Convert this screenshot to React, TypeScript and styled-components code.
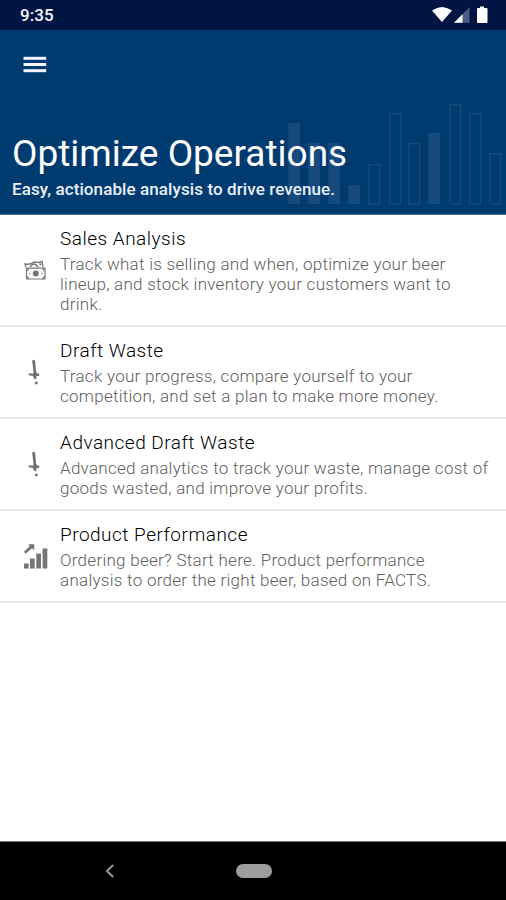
import React from 'react';
import styled, { createGlobalStyle } from 'styled-components';

const GlobalStyle = createGlobalStyle`
  * { box-sizing: border-box; }
  body { margin: 0; background: #fff; font-family: Roboto, sans-serif; }
`;

const Screen = styled.div`
  width: 506px;
  height: 900px;
  display: flex;
  flex-direction: column;
  background: #fff;
  overflow: hidden;
`;

const StatusBar = styled.div`
  height: 30px;
  flex: none;
  display: flex;
  align-items: center;
  justify-content: space-between;
  padding: 0 17px 0 20px;
  background: #001544;
`;

const Clock = styled.span`
  color: #f4f6fa;
  font-size: 17px;
  font-weight: 500;
  line-height: 30px;
  letter-spacing: 0.1px;
`;

const Header = styled.header`
  position: relative;
  height: 185px;
  flex: none;
  display: flex;
  flex-direction: column;
  padding: 26px 12px 0;
  background: #003b70;
  border-bottom: 1px solid #4b779b;
`;

const MenuButton = styled.button`
  width: 24px;
  height: 18px;
  margin-left: 11px;
  padding: 0;
  border: 0;
  background: none;
`;

const HeaderChart = styled.svg`
  position: absolute;
  right: 0;
  bottom: 0;
`;

const Title = styled.h1`
  position: relative;
  margin: 58px 0 0;
  color: #fff;
  font-size: 37px;
  font-weight: 400;
  line-height: 44px;
  white-space: nowrap;
`;

const Tagline = styled.p`
  position: relative;
  margin: 2px 0 0;
  color: #e9f0fa;
  font-size: 17px;
  font-weight: 500;
  line-height: 22px;
  letter-spacing: 0.1px;
  white-space: nowrap;
`;

const List = styled.ul`
  flex: 1;
  margin: 0;
  padding: 0;
  list-style: none;
`;

const Row = styled.li`
  display: flex;
  align-items: center;
  padding: 12px 0 11px 22px;
  border-bottom: 2px solid #e9e9e9;
`;

const RowIcon = styled.span`
  display: flex;
  width: 38px;
  margin-bottom: 2px;
  flex: none;
`;

const RowTitle = styled.h2`
  margin: 0 0 3px;
  color: #000;
  font-size: 19px;
  font-weight: 300;
  line-height: 24px;
  letter-spacing: 0.5px;
`;

const Description = styled.p`
  margin: 0;
  color: #606060;
  font-size: 17px;
  font-weight: 300;
  line-height: 20px;
  letter-spacing: 0.27px;
  white-space: pre;
`;

const NavBar = styled.nav`
  height: 59px;
  flex: none;
  display: flex;
  align-items: center;
  padding-left: 105px;
  background: #000;
  border-top: 1px solid #777;
`;

const HomePill = styled.span`
  width: 36px;
  height: 14px;
  margin-left: 121px;
  border-radius: 7px;
  background: #9d9d9d;
`;

const chartBars = [
  { x: 288, y: 123, filled: true },
  { x: 308, y: 143, filled: true },
  { x: 328, y: 143, filled: true },
  { x: 348, y: 185, filled: true },
  { x: 368, y: 164, filled: false },
  { x: 389, y: 113, filled: false },
  { x: 408, y: 143, filled: false },
  { x: 428, y: 133, filled: true },
  { x: 449, y: 104, filled: false },
  { x: 469, y: 113, filled: false },
  { x: 489, y: 153, filled: false },
];

const StatusIcons = () => (
  <svg width="58" height="20" viewBox="431 5 58 20">
    <path d="M432 10.5Q442 3.5 452 10.5L442 22Z" fill="#fff" />
    <path d="M469.5 7V22.8H454Z" fill="#4b5c82" />
    <path d="M462.5 14.2V22.8H454Z" fill="#fff" />
    <path d="M477 9q0-1 1-1h2V6.5h4V8h2.5q1 0 1 1v13q0 1-1 1H478q-1 0-1-1Z" fill="#fff" />
  </svg>
);

const MoneyIcon = () => (
  <svg width="26" height="24" viewBox="22 258 26 24" fill="none" stroke="#777">
    <path d="M26 267L25 264Q31 265 34 262Q38 263 42 261.5L43 267" strokeWidth="1.4" />
    <path d="M30 267Q34 261 38 267M39.5 263.5L41 265" strokeWidth="1.6" />
    <path d="M26.5 268.2H45V279H26.5Z" strokeWidth="1.2" />
    <path d="M26.5 271L29 268.5M42.5 268.5L45 271M26.5 276L29 279M42.5 279L45 276" strokeWidth="1.3" />
    <circle cx="35.8" cy="273.6" r="3" fill="#747474" stroke="none" />
    <path d="M29.5 273.6h1M41.5 273.6h1" strokeWidth="1.6" />
  </svg>
);

const TapIcon = () => (
  <svg width="26" height="30" viewBox="22 357 26 30" fill="#707070">
    <path d="M32.2 361Q33.5 358.5 35.2 361L36.1 372.5L33.6 372.8Z" />
    <path d="M28.7 373.2L32.8 373.8L33.8 371.8H36.4L37 373.5H39.2V376H36.6L36.2 379.5L33.8 378.5L33.1 375.9L28.8 375.3Z" />
    <circle cx="36.3" cy="383" r="1.4" />
  </svg>
);

const GrowthIcon = () => (
  <svg width="26" height="28" viewBox="22 542 26 28" fill="#747474">
    <rect x="24" y="563.5" width="4.7" height="5" />
    <rect x="30" y="558.5" width="4.7" height="10" />
    <rect x="36.3" y="553.5" width="4.7" height="15" />
    <rect x="42.6" y="548.5" width="4.7" height="20" />
    <path d="M24 551.8L29.8 546L28.2 544.2H34.2V550.2L32 548.2L25.5 553.8Z" />
  </svg>
);

const items = [
  {
    title: 'Sales Analysis',
    text: 'Track what is selling and when, optimize your beer\nlineup, and stock inventory your customers want to\ndrink.',
    Icon: MoneyIcon,
  },
  {
    title: 'Draft Waste',
    text: 'Track your progress, compare yourself to your\ncompetition, and set a plan to make more money.',
    Icon: TapIcon,
  },
  {
    title: 'Advanced Draft Waste',
    text: 'Advanced analytics to track your waste, manage cost of\ngoods wasted, and improve your profits.',
    Icon: TapIcon,
  },
  {
    title: 'Product Performance',
    text: 'Ordering beer? Start here. Product performance\nanalysis to order the right beer, based on FACTS.',
    Icon: GrowthIcon,
  },
];

export default function App() {
  return (
    <>
      <GlobalStyle />
      <Screen>
        <StatusBar>
          <Clock>9:35</Clock>
          <StatusIcons />
        </StatusBar>
        <Header>
          <HeaderChart width="222" height="114" viewBox="284 100 222 114">
            {chartBars.map((b) =>
              b.filled ? (
                <rect key={b.x} x={b.x + 0.3} y={b.y} width="11.5" height={204 - b.y} fill="#174b7e" />
              ) : (
                <rect key={b.x} x={b.x + 0.8} y={b.y + 0.7} width="10.7" height={203.3 - b.y} fill="none" stroke="#15497a" strokeWidth="1.5" />
              ),
            )}
          </HeaderChart>
          <MenuButton aria-label="Menu">
            <svg width="24" height="18" viewBox="23 56 24 18" fill="#f4f4ff" display="block">
              <rect x="23.5" y="56.8" width="22.7" height="3" />
              <rect x="23.5" y="63" width="22.7" height="3" />
              <rect x="23.5" y="69.2" width="22.7" height="3" />
            </svg>
          </MenuButton>
          <Title>Optimize Operations</Title>
          <Tagline>Easy, actionable analysis to drive revenue.</Tagline>
        </Header>
        <List>
          {items.map(({ title, text, Icon }) => (
            <Row key={title}>
              <RowIcon>
                <Icon />
              </RowIcon>
              <div>
                <RowTitle>{title}</RowTitle>
                <Description>{text}</Description>
              </div>
            </Row>
          ))}
        </List>
        <NavBar>
          <svg width="10" height="14" viewBox="0 0 10 14" fill="none" stroke="#999" strokeWidth="2">
            <path d="M8.2 1L2 7L8.2 13" />
          </svg>
          <HomePill />
        </NavBar>
      </Screen>
    </>
  );
}
